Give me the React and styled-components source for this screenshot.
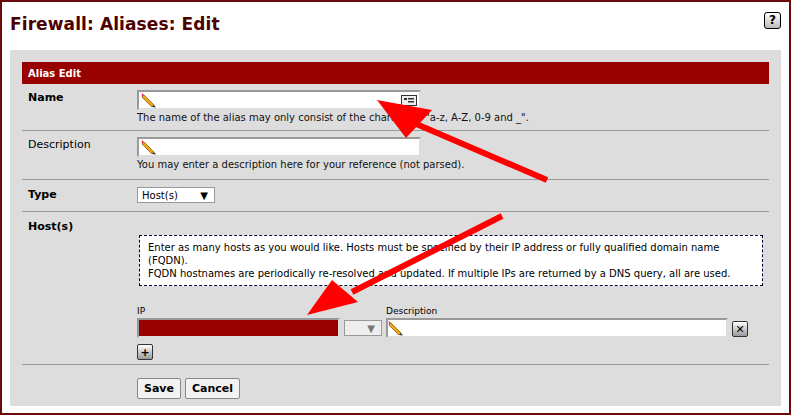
import React from "react";
import styled, { createGlobalStyle } from "styled-components";

const G = createGlobalStyle`
  html,body{margin:0;padding:0;background:#fff;}
  body{font-family:"DejaVu Sans",Verdana,sans-serif;font-size:10px;color:#000;}
`;
const Frame = styled.div`
  position:relative;width:791px;height:415px;box-sizing:border-box;
  border:2px solid #6b0a0a;background:#fff;overflow:hidden;
`;
const TitleBar = styled.div`
  display:flex;justify-content:space-between;align-items:center;
  height:44px;padding:0 8px 0 8px;box-sizing:border-box;
`;
const Title = styled.h1`
  margin:0;font-size:17px;font-weight:bold;color:#4d0000;letter-spacing:0.1px;
  font-family:"DejaVu Sans",sans-serif;
`;
const Help = styled.div`
  width:15px;height:15px;border:1px solid #000;border-radius:3px;background:linear-gradient(#fff,#bbb);
  font-weight:bold;font-size:12px;display:flex;align-items:center;justify-content:center;margin-top:-8px;
`;
const Panel = styled.div`
  margin:4px 8px 0 8px;background:#ddd;padding:12px 12px 0 12px;height:356px;box-sizing:border-box;
`;
const Head = styled.div`
  background:#990000;color:#fff;font-weight:bold;height:22px;display:flex;align-items:center;padding-left:6px;font-size:10px;
`;
const Row = styled.div`
  display:grid;grid-template-columns:115px 1fr;border-bottom:1px solid #999;
  min-height:${p=>p.h}px;box-sizing:border-box;padding:${p=>p.pt||6}px 0 4px 0;
`;
const Label = styled.div`
  padding-left:6px;font-weight:${p=>p.b?"bold":"normal"};font-size:11px;padding-top:1px;
`;
const Field = styled.div`display:flex;flex-direction:column;gap:2px;`;
const Input = styled.div`
  position:relative;width:${p=>p.w}px;height:20px;box-sizing:border-box;background:${p=>p.bg||"#fff"};
  border:2px solid #999;border-right-color:#ddd;border-bottom-color:#ddd;
`;
const Hint = styled.div`font-size:10px;color:#111;`;
const Pencil = ({x=2}) => (
  <svg width="16" height="16" viewBox="0 0 16 16" style={{position:"absolute",left:x,top:0}}>
    <path d="M3 3 L13 13 L11 15 L1 5 Z" fill="#f2a81c" stroke="#8a5a00" strokeWidth="0.8"/>
    <path d="M1 5 L3 3 L1.5 1.5 L0.5 1 L0.8 2.5Z" fill="#e35" />
    <path d="M11 15 L13 13 L15 15.5Z" fill="#333"/>
  </svg>
);
const Select = styled.div`
  width:${p=>p.w}px;height:16px;box-sizing:border-box;border:1px solid #999;background:${p=>p.bg||"#fff"};
  display:flex;justify-content:space-between;align-items:center;padding:0 6px 0 4px;font-size:10px;color:${p=>p.c||"#000"};
`;
const Note = styled.div`
  margin:16px 6px 0 2px;border:1px dashed #003;background:#fff;padding:5px 8px;line-height:13px;font-size:10px;
`;
const Small = styled.div`font-size:9px;`;
const Line = styled.div`display:flex;align-items:flex-end;gap:${p=>p.g||4}px;`;
const Col = styled.div`display:flex;flex-direction:column;gap:2px;`;
const Btn = styled.button`
  font:bold 11px "DejaVu Sans",sans-serif;padding:3px 6px;background:#f2f2f2;border:1px solid #888;border-radius:2px;
`;
const Icon = styled.div`
  width:14px;height:14px;border:1px solid #333;border-radius:2px;background:linear-gradient(#fff,#999);
  font-size:11px;font-weight:bold;display:flex;align-items:center;justify-content:center;line-height:1;
`;
const Arrows = styled.svg`position:absolute;left:0;top:0;pointer-events:none;`;

export default function App(){
  return (<><G/><Frame>
    <TitleBar><Title>Firewall: Aliases: Edit</Title><Help>?</Help></TitleBar>
    <Panel>
      <Head>Alias Edit</Head>
      <Row h={47} pt={6}><Label b>Name</Label><Field>
        <Input w={284}><Pencil/><svg width="16" height="11" style={{position:"absolute",right:2,top:3}}><rect x="0.5" y="0.5" width="15" height="10" fill="#eee" stroke="#333"/><rect x="3" y="3" width="3" height="2" fill="#333"/><rect x="7" y="3" width="6" height="1.5" fill="#333"/><rect x="7" y="6" width="6" height="1.5" fill="#333"/></svg></Input>
        <Hint>The name of the alias may only consist of the characters "a-z, A-Z, 0-9 and _".</Hint>
      </Field></Row>
      <Row h={49} pt={6}><Label>Description</Label><Field>
        <Input w={284}><Pencil/></Input>
        <Hint>You may enter a description here for your reference (not parsed).</Hint>
      </Field></Row>
      <Row h={32} pt={7}><Label b>Type</Label><Field>
        <Select w={78}>Host(s)<span>▼</span></Select>
      </Field></Row>
      <Row h={146} pt={7}><Label b>Host(s)</Label><Field>
        <Note>Enter as many hosts as you would like. Hosts must be specified by their IP address or fully qualified domain name (FQDN).<br/>FQDN hostnames are periodically re-resolved and updated. If multiple IPs are returned by a DNS query, all are used.</Note>
        <Line g={4} style={{marginTop:18}}>
          <Col><Small>IP</Small><Input w={203} bg="#990000"/></Col>
          <Select w={38} bg="#eee" c="#777" style={{marginBottom:2,justifyContent:"flex-end"}}>▼</Select>
          <Col><Small>Description</Small><Input w={342}><Pencil x={0}/></Input></Col>
          <Icon style={{marginBottom:1}}>✕</Icon>
        </Line>
        <Icon style={{marginTop:4}}>+</Icon>
      </Field></Row>
      <Row h={38} pt={7} style={{border:"none"}}><span/><Line g={4}><Btn>Save</Btn><Btn>Cancel</Btn></Line></Row>
    </Panel>
    <Arrows width="791" height="415">
      <line x1="545" y1="178" x2="405" y2="118" stroke="#f00" strokeWidth="6"/>
      <polygon points="375,98 430,108 404,136" fill="#f00"/>
      <line x1="500" y1="214" x2="350" y2="290" stroke="#f00" strokeWidth="6"/>
      <polygon points="305,313 330,278 356,300" fill="#f00"/>
    </Arrows>
  </Frame></>);
}
